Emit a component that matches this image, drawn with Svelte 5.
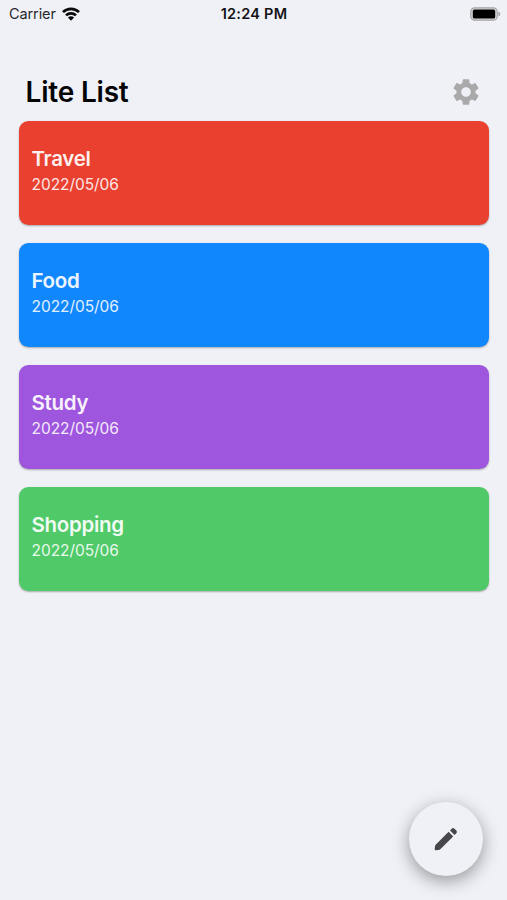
<script lang="ts">
  interface List {
    name: string;
    date: string;
    color: string;
  }

  let lists: List[] = $state([
    { name: 'Travel', date: '2022/05/06', color: 'red' },
    { name: 'Food', date: '2022/05/06', color: 'blue' },
    { name: 'Study', date: '2022/05/06', color: 'purple' },
    { name: 'Shopping', date: '2022/05/06', color: 'green' }
  ]);
</script>

<div class="screen">
  <div class="status">
    <div class="carrier">
      <span>Carrier</span>
      <svg class="wifi" viewBox="0 0 18 14">
        <g fill="none" stroke="#0b0b0c" stroke-width="2.7">
          <path d="M1 5.1a11.4 11.4 0 0 1 16 0" />
          <path d="M4 8.4a7.1 7.1 0 0 1 10 0" />
        </g>
        <path d="M9 13.7 5.9 10.6a4.5 4.5 0 0 1 6.2 0z" fill="#0b0b0c" />
      </svg>
    </div>
    <span class="time">12:24 PM</span>
    <svg class="battery" viewBox="0 0 31 14">
      <rect x="0.8" y="0.8" width="26.4" height="12.4" rx="3.8" fill="#d8d8da" stroke="#a5a5a8" stroke-width="1.2" />
      <rect x="2.8" y="2.4" width="22.4" height="9.2" rx="1.6" fill="#000" />
      <path d="M28.4 4.6q2 .7 2 2.4t-2 2.4z" fill="#a5a5a8" />
    </svg>
  </div>

  <header>
    <h1>Lite List</h1>
    <button class="settings" aria-label="Settings">
      <svg viewBox="0 0 24 24">
        <path
          d="M19.14 12.94c.04-.3.06-.61.06-.94 0-.32-.02-.64-.07-.94l2.03-1.58a.49.49 0 0 0 .12-.61l-1.92-3.32a.488.488 0 0 0-.59-.22l-2.39.96c-.5-.38-1.03-.7-1.62-.94l-.36-2.54a.484.484 0 0 0-.48-.41h-3.84c-.24 0-.43.17-.47.41l-.36 2.54c-.59.24-1.13.57-1.62.94l-2.39-.96c-.22-.08-.47 0-.59.22L2.74 8.87c-.12.21-.08.47.12.61l2.03 1.58c-.05.3-.09.63-.09.94s.02.64.07.94l-2.03 1.58a.49.49 0 0 0-.12.61l1.92 3.32c.12.22.37.29.59.22l2.39-.96c.5.38 1.03.7 1.62.94l.36 2.54c.05.24.24.41.48.41h3.84c.24 0 .44-.17.47-.41l.36-2.54c.59-.24 1.13-.56 1.62-.94l2.39.96c.22.08.47 0 .59-.22l1.92-3.32c.12-.22.07-.47-.12-.61l-2.01-1.58zM12 15.6A3.61 3.61 0 0 1 8.4 12c0-1.98 1.62-3.6 3.6-3.6s3.6 1.62 3.6 3.6-1.62 3.6-3.6 3.6z"
        />
      </svg>
    </button>
  </header>

  <main>
    {#each lists as list}
      <article class="card {list.color}">
        <h2>{list.name}</h2>
        <time>{list.date}</time>
      </article>
    {/each}
  </main>

  <button class="compose" aria-label="New list">
    <svg viewBox="0 0 24 24">
      <path
        d="M1.2 18.2 14.6 4.8l4.6 4.6L5.8 22.8l-3.6.5a1.3 1.3 0 0 1-1.5-1.5zM16 3.4l1.7-1.7a2 2 0 0 1 2.8 0l1.8 1.8a2 2 0 0 1 0 2.8L20.6 8z"
      />
    </svg>
  </button>
</div>

<style>
  :global(body) {
    margin: 0;
    background: #f0f1f7;
  }

  .screen {
    box-sizing: border-box;
    display: flex;
    flex-direction: column;
    height: 900px;
    padding: 0 18px 24px 19px;
    background: #f0f1f7;
    font-family: Inter, 'Liberation Sans', sans-serif;
  }

  button {
    display: flex;
    align-items: center;
    justify-content: center;
    padding: 0;
    border: 0;
    background: none;
  }

  .status {
    display: grid;
    grid-template-columns: 1fr auto 1fr;
    align-items: center;
    height: 27px;
    margin: 0 -12px 0 -10px;
    font-size: 14.5px;
    color: #141416;
  }

  .carrier {
    display: flex;
    align-items: center;
    gap: 6px;
    letter-spacing: -0.1px;
    color: #28282b;
  }

  .wifi {
    width: 18px;
    height: 14px;
  }

  .time {
    margin-right: 2px;
    font-weight: 600;
    letter-spacing: 0.25px;
  }

  .battery {
    justify-self: end;
    width: 31px;
    height: 14px;
  }

  header {
    display: flex;
    align-items: center;
    justify-content: space-between;
    height: 58px;
    margin-top: 36px;
    padding: 0 7px 0 6.5px;
  }

  h1 {
    margin: 0;
    padding-bottom: 1px;
    font-size: 28px;
    font-weight: 600;
    letter-spacing: -0.2px;
    color: #050506;
  }

  .settings svg {
    width: 32px;
    height: 32px;
    fill: #a9a9aa;
  }

  main {
    display: flex;
    flex-direction: column;
    gap: 18.5px;
  }

  .card {
    box-sizing: border-box;
    height: 103.6px;
    padding: 25px 12.5px;
    border-radius: 9.5px;
    color: #fff;
    box-shadow: 0 1px 2px rgba(0, 0, 0, 0.3);
  }

  .red {
    background: #ea4030;
  }

  .blue {
    background: #1187fe;
  }

  .purple {
    background: #9f56de;
  }

  .green {
    background: #50ca69;
  }

  h2 {
    margin: 0;
    font-size: 20.5px;
    font-weight: 600;
    line-height: 26px;
    letter-spacing: -0.3px;
    opacity: 0.92;
  }

  time {
    display: block;
    font-size: 15.5px;
    line-height: 26px;
    letter-spacing: -0.05px;
    opacity: 0.88;
  }

  .compose {
    width: 74px;
    height: 74px;
    margin: auto 6px 0 auto;
    border-radius: 50%;
    background: #f0f1f7;
    box-shadow: 0 5px 17px rgba(0, 0, 0, 0.38);
  }

  .compose svg {
    width: 24px;
    height: 24px;
    fill: #47474a;
  }
</style>
